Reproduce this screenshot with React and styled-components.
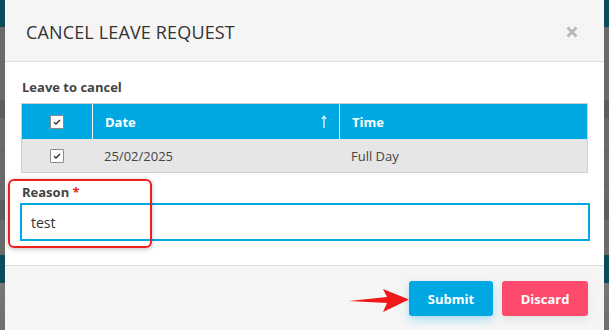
import React from 'react'
import styled, { createGlobalStyle } from 'styled-components'

const GlobalStyle = createGlobalStyle`
  html, body {
    margin: 0;
    padding: 0;
  }
  body {
    font-family: "Open Sans", "Noto Sans", sans-serif;
    background: #666;
  }
`

const rows = [{ date: '25/02/2025', time: 'Full Day' }]

const Backdrop = styled.div`
  width: 609px;
  height: 330px;
  overflow: hidden;
  position: relative;
  background: linear-gradient(
    to bottom,
    #0d4a5c 0px,
    #0d4a5c 27px,
    #6a6a6a 27px,
    #6a6a6a 100px,
    #5d5d5d 100px,
    #5d5d5d 118px,
    #6a6a6a 118px,
    #6a6a6a 150px,
    #555 150px,
    #6a6a6a 151px,
    #6a6a6a 185px,
    #555 185px,
    #6a6a6a 186px,
    #6a6a6a 200px,
    #5d5d5d 200px,
    #5d5d5d 220px,
    #6a6a6a 220px,
    #6a6a6a 255px,
    #0d4a5c 255px,
    #0d4a5c 283px,
    #777 283px,
    #6e6e6e 330px
  );
`

const Modal = styled.div`
  position: absolute;
  top: 0;
  left: 5px;
  width: 599px;
  height: 340px;
  background: #fff;
  display: flex;
  flex-direction: column;
`

const Header = styled.div`
  height: 62px;
  background: #f5f5f5;
  border-bottom: 1px solid #dcdcdc;
  display: flex;
  align-items: center;
  justify-content: space-between;
  padding: 0 26px 0 21px;
  box-sizing: border-box;
`

const Title = styled.h2`
  margin: 0;
  font-size: 18px;
  font-weight: 500;
  color: #333;
  letter-spacing: 0.15px;
  padding-top: 3px;
`

const Close = styled.svg`
  margin-top: 3px;
`

const Body = styled.div`
  padding: 16px 14px 24px 16px;
  display: flex;
  flex-direction: column;
`

const Label = styled.div`
  font-size: 13px;
  font-weight: 700;
  color: #444;
  margin-top: ${p => p.$top || 0}px;
  margin-bottom: ${p => p.$gap || 6}px;
  padding-left: 1px;
`

const Required = styled.span`
  color: #e8222a;
`

const Table = styled.div`
  width: 567px;
  border: 1px solid #cfcfcf;
  box-sizing: border-box;
`

const Row = styled.div`
  display: grid;
  grid-template-columns: 70px 247px 1fr;
  height: ${p => p.$head ? 35 : 33}px;
  background: ${p => p.$head ? '#00a8e3' : '#e6e6e6'};
  color: ${p => p.$head ? '#fff' : '#444'};
  font-size: 13px;
  font-weight: ${p => p.$head ? 700 : 400};
`

const Cell = styled.div`
  display: flex;
  align-items: center;
  justify-content: ${p => p.$center ? 'center' : 'space-between'};
  padding: ${p => p.$center ? '0' : '0 12px'};
  border-left: ${p => p.$divider ? '1px solid #fff' : 'none'};
`

const Check = styled.span`
  width: 14px;
  height: 14px;
  background: #fff;
  border: 1px solid #8a8a8a;
  border-radius: 1px;
  display: flex;
  align-items: center;
  justify-content: center;
  box-sizing: border-box;
`

const Input = styled.div`
  margin-left: -1px;
  width: 570px;
  height: 38px;
  border: 2px solid #00a8e3;
  box-sizing: border-box;
  display: flex;
  align-items: center;
  padding-left: 9px;
  font-size: 14px;
  color: #333;
`

const Footer = styled.div`
  border-top: 1px solid #dcdcdc;
  background: #f5f5f5;
  flex: 1;
  display: flex;
  justify-content: flex-end;
  align-items: flex-start;
  gap: 9px;
  padding: 15px 16px 0 0;
`

const Button = styled.button`
  height: 35px;
  width: ${p => p.$w}px;
  border: none;
  border-radius: 3px;
  background: ${p => p.$bg};
  color: #fff;
  font-family: "Open Sans", sans-serif;
  font-size: 13px;
  font-weight: 700;
  box-shadow: 0 4px 8px ${p => p.$shadow};
`

const Highlight = styled.div`
  position: absolute;
  left: 3px;
  top: 179px;
  width: 144px;
  height: 69px;
  border: 2px solid #f01e1e;
  border-radius: 6px;
  box-sizing: border-box;
  box-shadow: 0 1px 5px rgba(0, 0, 0, 0.25);
`

const Arrow = styled.svg`
  position: absolute;
  left: 343px;
  top: 286px;
`

const CheckMark = () => (
  <svg width="8" height="6" viewBox="0 0 8 6">
    <path d="M1 3.2 L3 5 L7 1" fill="none" stroke="#333" strokeWidth="1.4" />
  </svg>
)

const SortArrow = () => (
  <svg width="6" height="14" viewBox="0 0 6 14">
    <path d="M3 13 V1.5 M0.8 3.8 L3 1.2 L5.2 3.8" fill="none" stroke="#e8f7ff" strokeWidth="1.3" />
  </svg>
)

export default function App() {
  return (
    <Backdrop>
      <GlobalStyle />
      <Modal>
        <Header>
          <Title>CANCEL LEAVE REQUEST</Title>
          <Close width="12" height="12" viewBox="0 0 12 12">
            <path d="M1.5 1.5 L10.5 10.5 M10.5 1.5 L1.5 10.5" stroke="#b9b9b9" strokeWidth="3" />
          </Close>
        </Header>
        <Body>
          <Label $gap={7}>Leave to cancel</Label>
          <Table>
            <Row $head>
              <Cell $center><Check><CheckMark /></Check></Cell>
              <Cell $divider>Date<SortArrow /></Cell>
              <Cell $divider>Time</Cell>
            </Row>
            {rows.map(r => (
              <Row key={r.date}>
                <Cell $center><Check><CheckMark /></Check></Cell>
                <Cell>{r.date}</Cell>
                <Cell>{r.time}</Cell>
              </Row>
            ))}
          </Table>
          <Label $top={10} $gap={2}>Reason <Required>*</Required></Label>
          <Input>test</Input>
        </Body>
        <Footer>
          <Button $w={84} $bg="#00a8e3" $shadow="rgba(0, 168, 227, 0.3)">Submit</Button>
          <Button $w={86} $bg="#fe4a6c" $shadow="rgba(0, 0, 0, 0.08)">Discard</Button>
        </Footer>
        <Highlight />
      </Modal>
      <Arrow width="70" height="30" viewBox="0 0 70 30">
        <path d="M6 15 L44 11 L40 3 L66 13.5 L40 26 L44 17 Z" fill="#f01818" />
      </Arrow>
    </Backdrop>
  )
}
